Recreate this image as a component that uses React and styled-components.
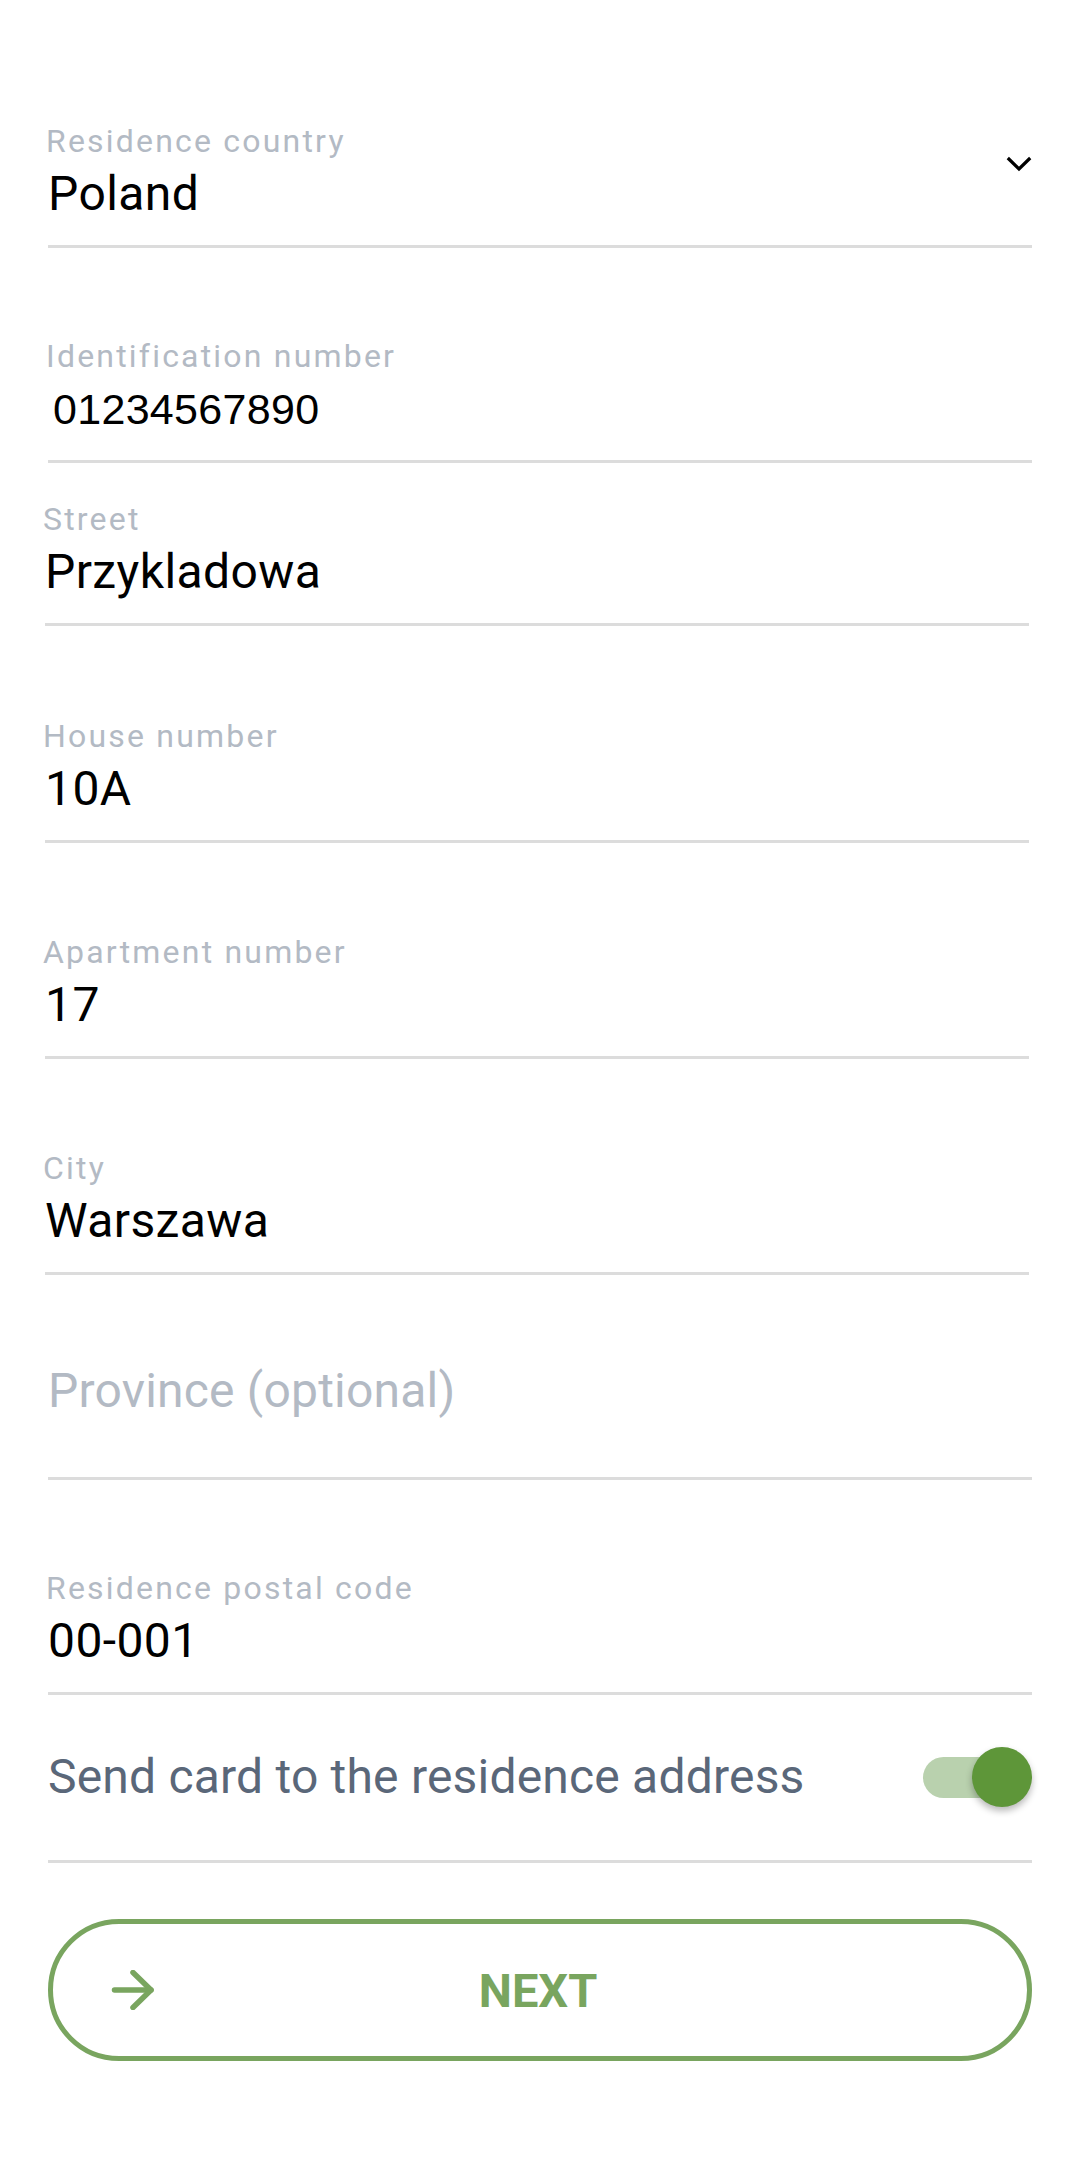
import React, { useState } from "react";
import styled, { createGlobalStyle } from "styled-components";

const GlobalStyle = createGlobalStyle`
  html, body {
    margin: 0;
    padding: 0;
    background: #ffffff;
  }
  body {
    font-family: Roboto, "Noto Sans", Arial, sans-serif;
    -webkit-font-smoothing: antialiased;
  }
`;

const fields = [
  { key: "country", label: "Residence country", value: "Poland", space: 0, select: true },
  { key: "id", label: "Identification number", value: "01234567890", space: 88, digits: true },
  { key: "street", label: "Street", value: "Przykladowa", space: 36, shift: true },
  { key: "house", label: "House number", value: "10A", space: 90, shift: true },
  { key: "apartment", label: "Apartment number", value: "17", space: 89, shift: true },
  { key: "city", label: "City", value: "Warszawa", space: 89, shift: true },
  { key: "province", placeholder: "Province (optional)", space: 88 },
  { key: "postal", label: "Residence postal code", value: "00-001", space: 88 },
];

export default function App() {
  const [sendToResidence, setSendToResidence] = useState(true);

  return (
    <>
      <GlobalStyle />
      <Page>
        {fields.map((field) => (
          <Field
            key={field.key}
            $space={field.space}
            $shift={field.shift}
            $empty={!!field.placeholder}
          >
            <FieldText>
              {field.placeholder ? (
                <Placeholder>{field.placeholder}</Placeholder>
              ) : (
                <>
                  <FieldLabel>{field.label}</FieldLabel>
                  <FieldValue $digits={field.digits}>{field.value}</FieldValue>
                </>
              )}
            </FieldText>
            {field.select && (
              <Chevron width="26" height="16" viewBox="0 0 26 16">
                <polyline points="1.8,2 13,13 24.2,2" />
              </Chevron>
            )}
          </Field>
        ))}

        <ToggleRow>
          <ToggleText>Send card to the residence address</ToggleText>
          <Switch
            $on={sendToResidence}
            onClick={() => setSendToResidence(!sendToResidence)}
          >
            <Track $on={sendToResidence} />
            <Thumb $on={sendToResidence} />
          </Switch>
        </ToggleRow>

        <NextButton>
          <ArrowIcon width="46" height="40" viewBox="0 0 46 40">
            <line x1="3.5" y1="20" x2="40" y2="20" />
            <polyline points="22,2.5 40,20 22,37.5" />
          </ArrowIcon>
          <NextLabel>NEXT</NextLabel>
        </NextButton>
      </Page>
    </>
  );
}

const Page = styled.div`
  display: flex;
  flex-direction: column;
  width: 1080px;
  box-sizing: border-box;
  padding: 121px 48px 99px;
  background: #ffffff;
`;

const Field = styled.div`
  display: flex;
  align-items: flex-start;
  margin-top: ${(p) => p.$space}px;
  margin-left: ${(p) => (p.$shift ? "-3px" : "0")};
  margin-right: ${(p) => (p.$shift ? "3px" : "0")};
  padding-bottom: ${(p) => (p.$empty ? "58px" : "23px")};
  border-bottom: 3px solid #dcdcdc;
`;

const FieldText = styled.div`
  flex: 1;
  display: flex;
  flex-direction: column;
  gap: 5px;
  min-width: 0;
`;

const FieldLabel = styled.div`
  margin-left: -2px;
  font-size: 32px;
  line-height: 40px;
  letter-spacing: 2.2px;
  color: #b3bac4;
`;

const FieldValue = styled.div`
  font-family: ${(p) =>
    p.$digits ? '"Liberation Sans", Arial, sans-serif' : "Roboto, sans-serif"};
  font-size: ${(p) => (p.$digits ? "43px" : "48px")};
  letter-spacing: ${(p) => (p.$digits ? "0.3px" : "0.4px")};
  padding-left: ${(p) => (p.$digits ? "5px" : "0")};
  line-height: 56px;
  color: #000000;
`;

const Placeholder = styled.div`
  font-size: 48px;
  line-height: 56px;
  letter-spacing: 0.2px;
  color: #b3bac4;
`;

const Chevron = styled.svg`
  flex: none;
  margin-top: 35px;
  fill: none;
  stroke: #000000;
  stroke-width: 3.2;
`;

const ToggleRow = styled.div`
  display: flex;
  align-items: center;
  justify-content: space-between;
  padding: 52px 0 53px;
  border-bottom: 3px solid #dcdcdc;
`;

const ToggleText = styled.div`
  font-size: 48px;
  line-height: 60px;
  letter-spacing: 0.2px;
  color: #5a6779;
`;

const Switch = styled.div`
  position: relative;
  flex: none;
  width: 109px;
  height: 60px;
  cursor: pointer;
`;

const Track = styled.div`
  position: absolute;
  left: 0;
  top: 10px;
  width: 98px;
  height: 41px;
  border-radius: 21px;
  background: ${(p) => (p.$on ? "#b9d1ae" : "#d6d6d6")};
`;

const Thumb = styled.div`
  position: absolute;
  top: 0;
  ${(p) => (p.$on ? "right: 0;" : "left: 0;")}
  width: 60px;
  height: 60px;
  border-radius: 50%;
  background: ${(p) => (p.$on ? "#5e9639" : "#f4f4f4")};
  box-shadow: 0 4px 7px rgba(0, 0, 0, 0.28);
`;

const NextButton = styled.button`
  display: flex;
  align-items: center;
  margin-top: 56px;
  height: 142px;
  box-sizing: border-box;
  padding: 0 108px 0 58px;
  border: 5px solid #79a55f;
  border-radius: 71px;
  background: #ffffff;
  cursor: pointer;
`;

const ArrowIcon = styled.svg`
  flex: none;
  fill: none;
  stroke: #79a55f;
  stroke-width: 5.5;
  stroke-linecap: round;
  stroke-linejoin: round;
`;

const NextLabel = styled.span`
  flex: 1;
  text-align: center;
  font-family: Roboto, sans-serif;
  font-weight: 700;
  font-size: 47px;
  color: #79a55f;
`;
